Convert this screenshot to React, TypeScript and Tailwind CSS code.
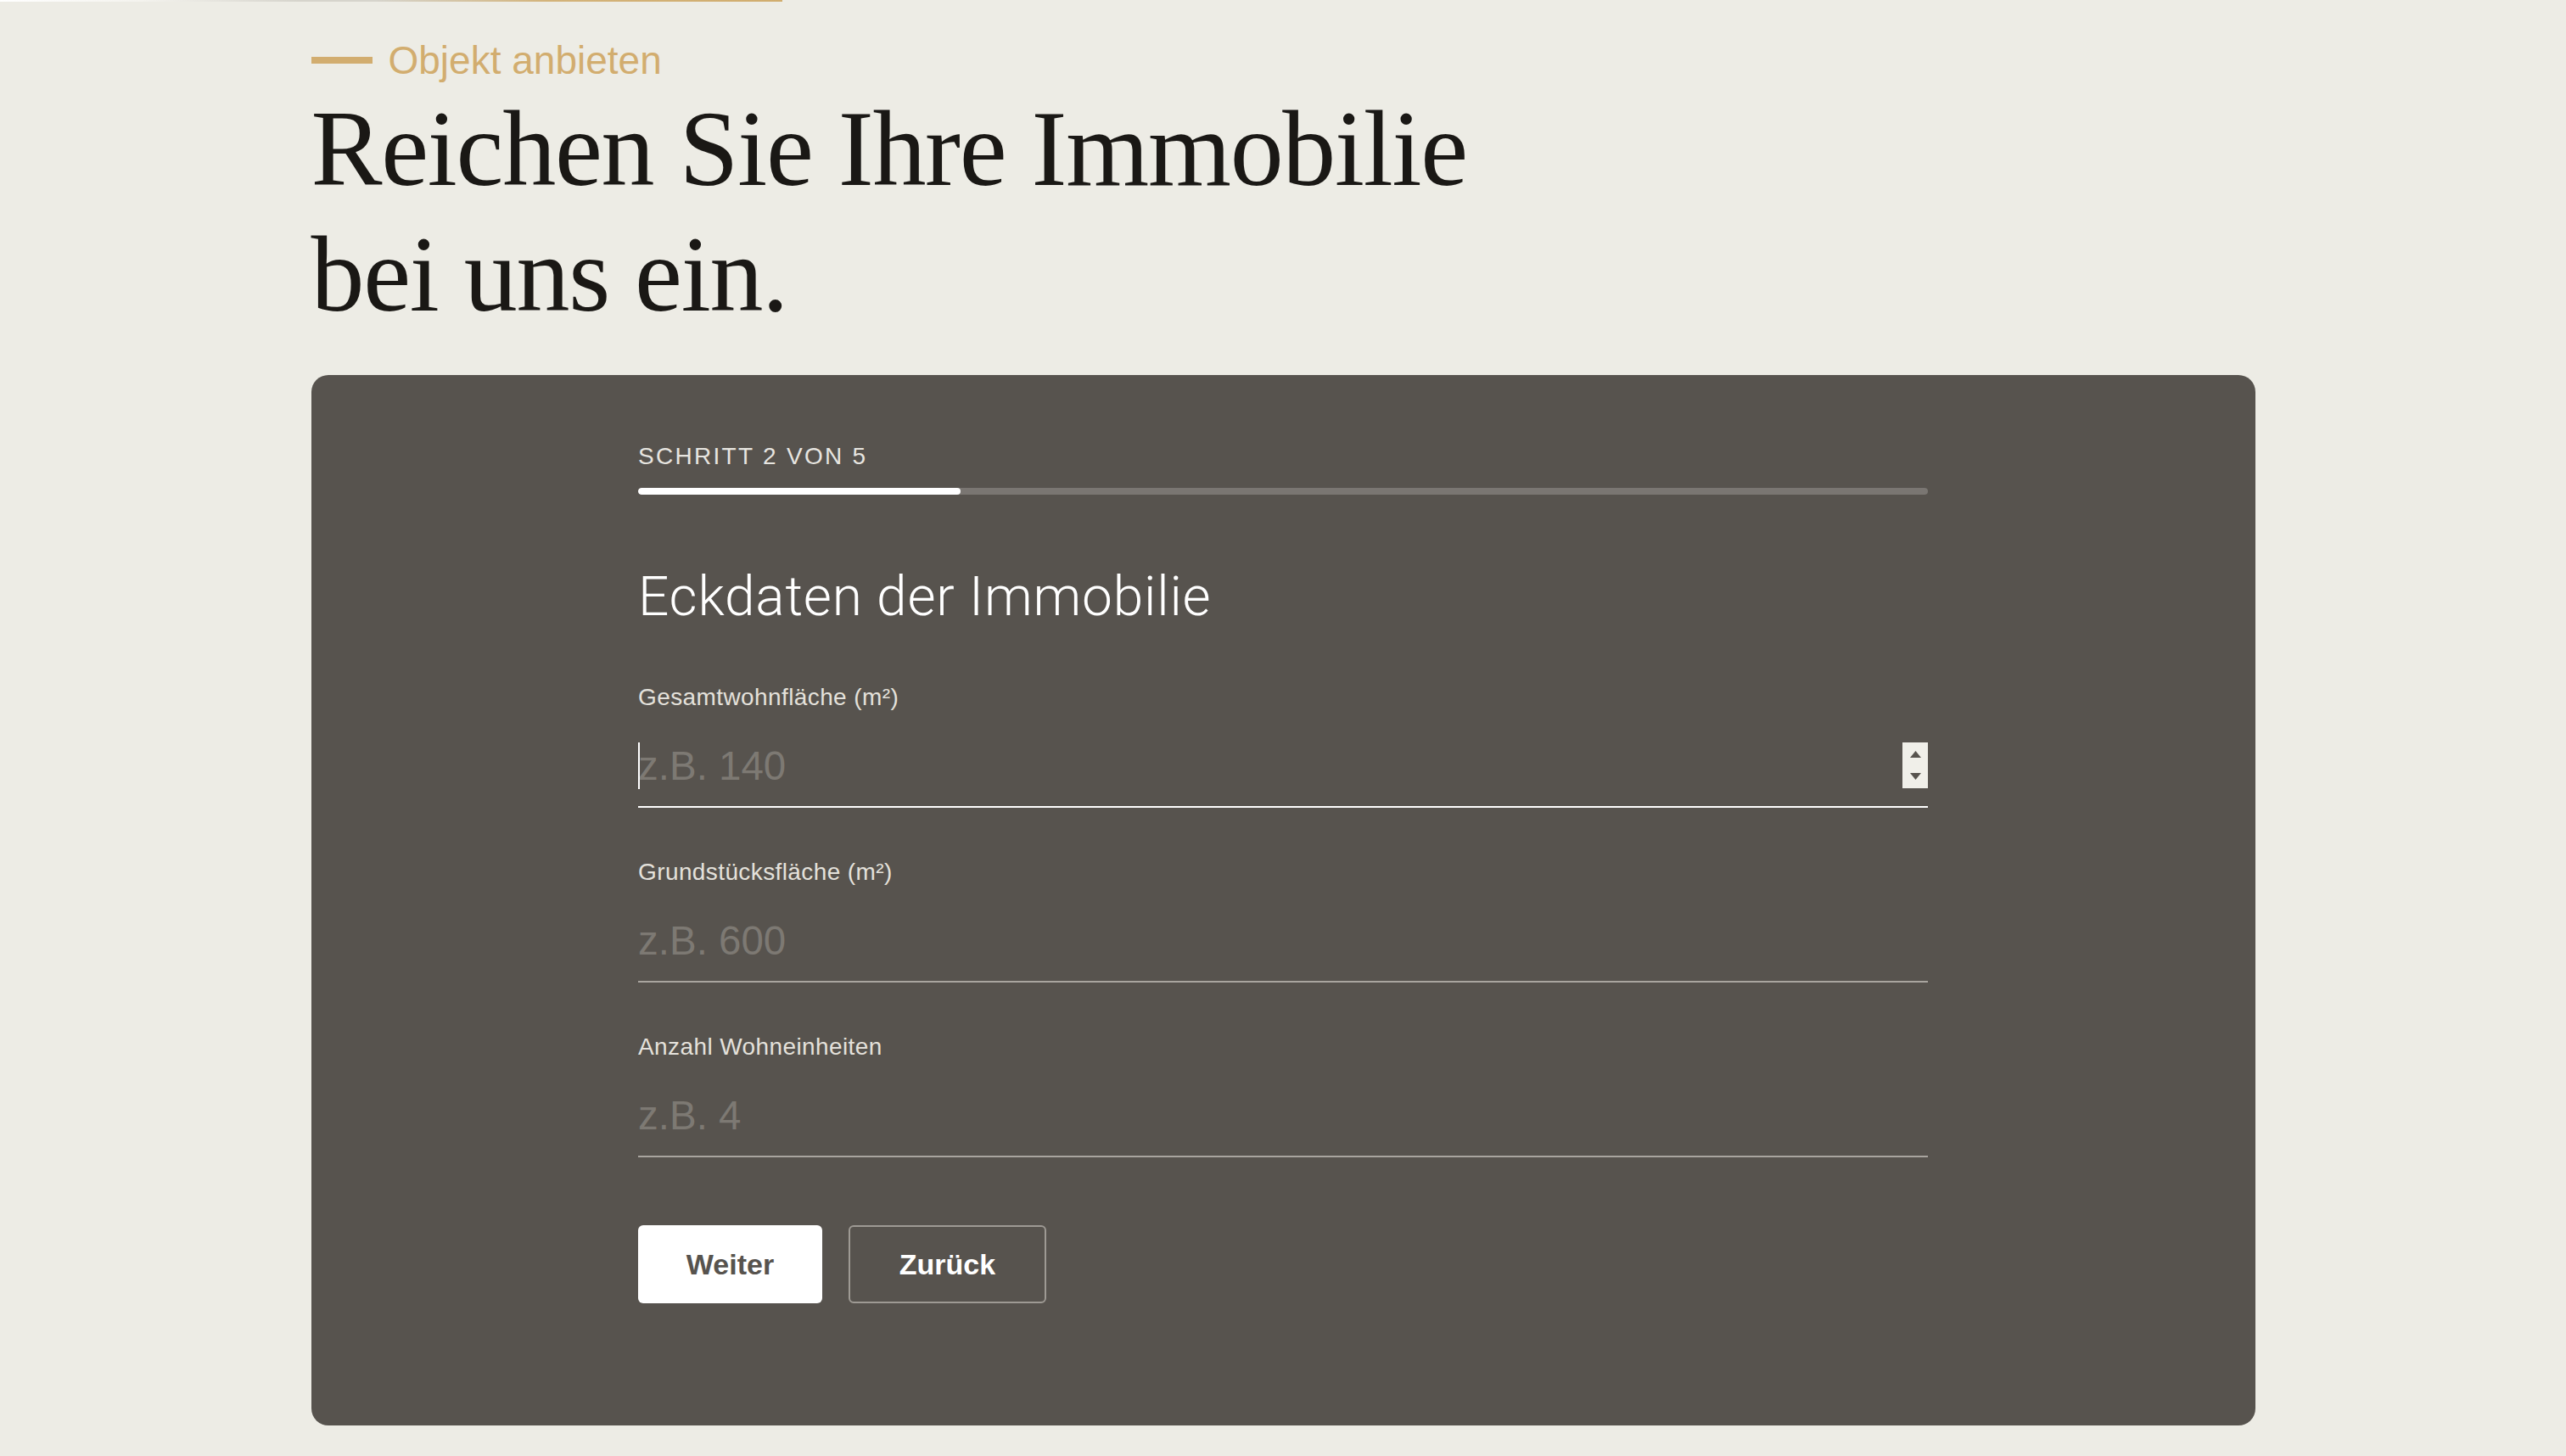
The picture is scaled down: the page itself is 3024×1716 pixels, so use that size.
import React from "react";

const sans = { fontFamily: '"Liberation Sans", Arial, sans-serif' };

function Field({
  label,
  placeholder,
  focused,
}: {
  label: string;
  placeholder: string;
  focused?: boolean;
}) {
  return (
    <div className="flex flex-col">
      <label className="text-[28px] leading-[32px] tracking-[0.4px] text-[#e4e1db]" style={sans}>
        {label}
      </label>
      <div className="relative mt-[17px]">
        <input
          type="text"
          placeholder={placeholder}
          className={
            "block w-full h-[97px] bg-transparent outline-none text-[47.5px] text-white placeholder:text-[#7d7973] border-b-2 " +
            (focused ? "border-white" : "border-[#a9a59f]")
          }
          style={sans}
        />
        {focused && (
          <>
            <span className="absolute left-0 top-[20px] h-[55px] w-[2px] bg-white" />
            <span className="absolute right-0 top-[20px] flex h-[54px] w-[30px] flex-col items-center justify-center gap-[18px] bg-[#f0efe9]">
              <svg width="13" height="8" viewBox="0 0 13 8">
                <path d="M6.5 0 L13 8 L0 8 Z" fill="#57534e" />
              </svg>
              <svg width="13" height="8" viewBox="0 0 13 8">
                <path d="M0 0 L13 0 L6.5 8 Z" fill="#57534e" />
              </svg>
            </span>
          </>
        )}
      </div>
    </div>
  );
}

export default function App() {
  return (
    <div className="min-h-screen bg-[#edece5]">
      <div
        className="h-[2px] w-[922px]"
        style={{
          background:
            "linear-gradient(to right, #ffffff 0%, #f4f3ee 18%, #d6d4cc 38%, #d6d4cc 48%, #d3b37a 70%, #d1ad6e 100%)",
        }}
      />
      <div className="mx-auto w-[2291px]">
        <div className="mt-[43px] flex items-center gap-[19px]">
          <span className="block h-[8px] w-[72px] bg-[#d2ad6f]" />
          <span className="text-[46px] leading-[52px] text-[#d2ad6f]" style={sans}>
            Objekt anbieten
          </span>
        </div>
        <h1
          className="mt-[5px] text-[126px] leading-[148px] tracking-[-1.3px] font-normal text-[#1a1815]"
          style={{ fontFamily: '"Liberation Serif", "Times New Roman", serif' }}
        >
          Reichen Sie Ihre Immobilie
          <br />
          bei uns ein.
        </h1>

        <div className="mt-[44px] rounded-[20px] bg-[#57534e] pt-[80px] pb-[144px]">
          <div className="mx-auto w-[1520px]">
            <div
              className="text-[28px] leading-[32px] tracking-[2.3px] text-[#e7e5e0]"
              style={sans}
            >
              SCHRITT 2 VON 5
            </div>
            <div className="mt-[21px] h-[8px] w-full overflow-hidden rounded-full bg-[#7a7672]">
              <div className="h-full w-1/4 rounded-full bg-white" />
            </div>

            <h2
              className="mt-[83px] text-[64px] leading-[76px] tracking-[0.8px] font-light text-white"
              style={{ fontFamily: 'Roboto, "Liberation Sans", sans-serif' }}
            >
              Eckdaten der Immobilie
            </h2>

            <div className="mt-[64px] flex flex-col gap-[60px]">
              <Field label="Gesamtwohnfläche (m²)" placeholder="z.B. 140" focused />
              <Field label="Grundstücksfläche (m²)" placeholder="z.B. 600" />
              <Field label="Anzahl Wohneinheiten" placeholder="z.B. 4" />
            </div>

            <div className="mt-[80px] flex items-center gap-[31px]">
              <button
                className="flex h-[92px] w-[217px] items-center justify-center rounded-[6px] bg-white text-[34px] font-bold text-[#57534e]"
                style={sans}
              >
                Weiter
              </button>
              <button
                className="flex h-[92px] w-[233px] items-center justify-center rounded-[6px] border-2 border-[#9e9a94] bg-transparent text-[34px] font-bold text-white"
                style={sans}
              >
                Zurück
              </button>
            </div>
          </div>
        </div>
      </div>
    </div>
  );
}
